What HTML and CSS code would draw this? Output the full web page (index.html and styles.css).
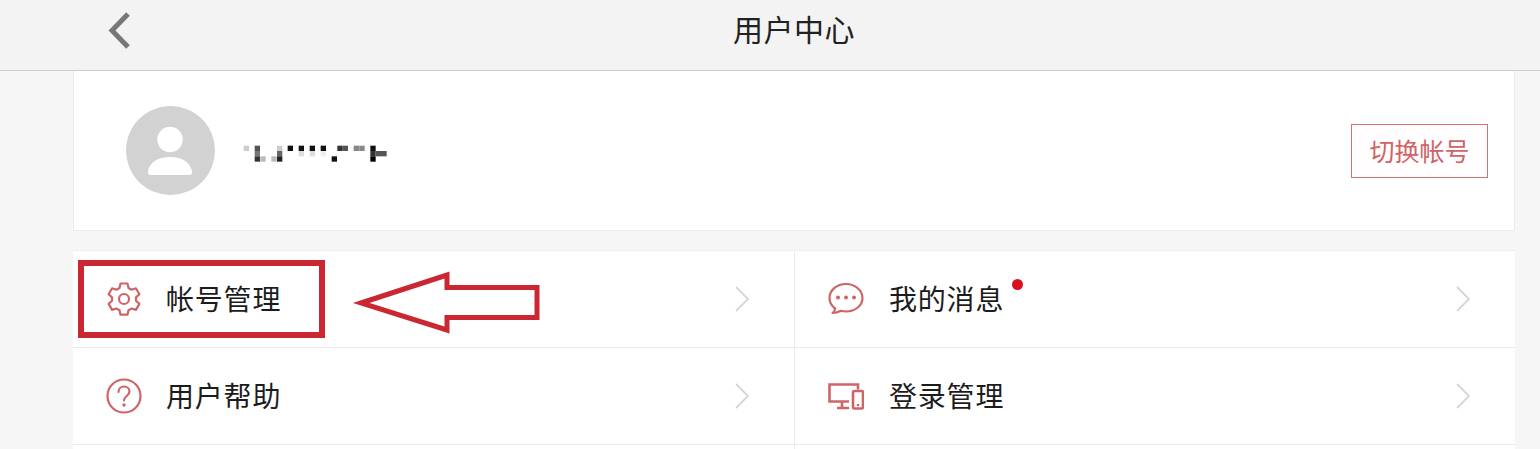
FILE: index.html
```html
<!DOCTYPE html>
<html lang="zh-CN">
<head>
<meta charset="utf-8">
<title>用户中心</title>
<link rel="stylesheet" href="styles.css">
</head>
<body>
<div class="page">
  <header class="topbar">
    <svg class="back" viewBox="0 0 24 40" width="24" height="40"><path d="M20 3 4 19.500 20 36" fill="none" stroke="#777" stroke-width="5"/></svg>
    <h1 class="title">用户中心</h1>
    <span></span>
  </header>
  <main class="content">
    <section class="profile">
      <svg class="avatar" viewBox="0 0 89 89" width="89" height="89">
        <circle cx="44.500" cy="44.500" r="44.500" fill="#d2d2d2"/>
        <circle cx="44" cy="33.500" r="12.700" fill="#fff"/>
        <path d="M25 69c-2.500 0-3.600-1.500-3.100-3.400C23.600 56 32 51 44 51s20.400 5 22.100 14.600c.4 2-.6 3.400-3.100 3.400z" fill="#fff"/>
      </svg>
      <svg class="mosaic" viewBox="540 436 444 54" width="148" height="18">
        <rect x="545" y="438" width="16" height="16" fill="#ccc"/>
        <rect x="578" y="438" width="16" height="16" fill="#555"/>
        <rect x="578" y="454" width="16" height="16" fill="#777"/>
        <rect x="578" y="470" width="16" height="16" fill="#333"/>
        <rect x="595" y="470" width="16" height="16" fill="#bbb"/>
        <rect x="628" y="470" width="16" height="16" fill="#bbb"/>
        <rect x="645" y="438" width="16" height="16" fill="#ccc"/>
        <rect x="645" y="454" width="16" height="16" fill="#666"/>
        <rect x="645" y="470" width="16" height="16" fill="#222"/>
        <rect x="677" y="438" width="16" height="16" fill="#111"/>
        <rect x="710" y="438" width="16" height="16" fill="#111"/>
        <rect x="710" y="454" width="16" height="16" fill="#ddd"/>
        <rect x="743" y="438" width="16" height="16" fill="#111"/>
        <rect x="743" y="454" width="16" height="16" fill="#ddd"/>
        <rect x="776" y="438" width="16" height="16" fill="#111"/>
        <rect x="776" y="454" width="16" height="16" fill="#eee"/>
        <rect x="809" y="470" width="16" height="16" fill="#111"/>
        <rect x="826" y="438" width="16" height="16" fill="#333"/>
        <rect x="842" y="438" width="16" height="16" fill="#555"/>
        <rect x="875" y="438" width="17" height="16" fill="#888"/>
        <rect x="892" y="438" width="16" height="16" fill="#888"/>
        <rect x="925" y="438" width="16" height="16" fill="#111"/>
        <rect x="925" y="454" width="16" height="16" fill="#333"/>
        <rect x="925" y="470" width="16" height="16" fill="#000"/>
        <rect x="941" y="454" width="33" height="16" fill="#555"/>
      </svg>
      <button class="switch">切换帐号</button>
    </section>
    <section class="menu">
      <div class="item">
        <svg class="icon" viewBox="0 0 36 36" width="36" height="36"><g fill="none" stroke="#cf6468" stroke-width="2.200" stroke-linejoin="round"><path d="M14.500 2.500h7l1 4.500 3 1.700 4.400-1.400 3.500 6-3.400 3.100v3.400l3.400 3.100-3.500 6-4.400-1.400-3 1.700-1 4.500h-7l-1-4.500-3-1.700-4.400 1.400-3.500-6 3.400-3.100v-3.400L2.600 13.300l3.500-6 4.400 1.400 3-1.700z"/><circle cx="18" cy="18" r="5"/></g></svg>
        <span class="label">帐号管理</span>
        <svg class="chev" viewBox="0 0 14 26" width="14" height="26"><path d="M1 1l12 12L1 25" fill="none" stroke="#d6d6d6" stroke-width="1.800"/></svg>
      </div>
      <div class="item">
        <svg class="icon" viewBox="0 0 36 36" width="36" height="36"><g fill="#cf6468"><path d="M18 3C8.600 3 1.500 9.200 1.500 17c0 4.300 2.200 8 5.700 10.500-.2 1.800-1.200 3.300-2.700 4.500 3.300 0 6-.8 8.300-2.200 1.700.4 3.400.7 5.200.7 9.400 0 16.500-6.200 16.500-13.500S27.400 3 18 3z" fill="none" stroke="#cf6468" stroke-width="2.200" stroke-linejoin="round"/><circle cx="10" cy="16.500" r="2"/><circle cx="18" cy="16.500" r="2"/><circle cx="26" cy="16.500" r="2"/></g></svg>
        <span class="label">我的消息</span>
        <i class="dot"></i>
        <svg class="chev" viewBox="0 0 14 26" width="14" height="26"><path d="M1 1l12 12L1 25" fill="none" stroke="#d6d6d6" stroke-width="1.800"/></svg>
      </div>
      <div class="item">
        <svg class="icon" viewBox="0 0 36 36" width="36" height="36"><g fill="none" stroke="#cf6468" stroke-width="2.200"><circle cx="18" cy="18" r="16.500"/><path d="M12.500 14c0-3.200 2.400-5.500 5.500-5.500s5.500 2.200 5.500 5c0 4.500-5.500 4.500-5.500 9" stroke-linecap="round"/></g><circle cx="18" cy="27" r="1.700" fill="#cf6468"/></svg>
        <span class="label">用户帮助</span>
        <svg class="chev" viewBox="0 0 14 26" width="14" height="26"><path d="M1 1l12 12L1 25" fill="none" stroke="#d6d6d6" stroke-width="1.800"/></svg>
      </div>
      <div class="item">
        <svg class="icon" viewBox="0 0 36 36" width="36" height="36"><g fill="none" stroke="#cf6468" stroke-width="2.600"><path d="M21 23.500H1.500V6.500H30v5"/><path d="M9 30h12M14 24v6"/><rect x="25" y="13" width="10" height="17.500" rx="1.500"/></g><circle cx="30" cy="27" r="1.300" fill="#cf6468"/></svg>
        <span class="label">登录管理</span>
        <svg class="chev" viewBox="0 0 14 26" width="14" height="26"><path d="M1 1l12 12L1 25" fill="none" stroke="#d6d6d6" stroke-width="1.800"/></svg>
      </div>
      <div class="item"></div>
      <div class="item"></div>
    </section>
  </main>
  <div class="mark-box"></div>
  <svg class="mark-arrow" viewBox="0 0 190 66" width="190" height="66"><path d="M8 33 94 5v12.500h90v30H94V60z" fill="none" stroke="#cb2733" stroke-width="5"/></svg>
</div>
</body>
</html>
```

FILE: styles.css
```css
html, body {
  margin: 0;
  padding: 0;
  height: 100%;
  overflow: hidden;
}
body {
  background: #f6f6f6;
  font-family: "Noto Sans CJK SC", "Noto Sans", sans-serif;
  color: #1c1c1c;
}
.page {
  position: relative;
  width: 1540px;
  height: 449px;
  overflow: hidden;
}
.topbar {
  display: grid;
  grid-template-columns: 1fr auto 1fr;
  align-items: center;
  height: 70px;
  padding: 0 25px 0 73px;
  background: #f3f3f3;
  border-bottom: 1px solid #cdcdcd;
}
.back {
  margin: 0 0 9px 35px;
}
.title {
  margin: 0 0 14px;
  font-size: 30px;
  font-weight: 400;
  letter-spacing: 0.5px;
  line-height: 1;
  color: #222;
}
.content {
  display: flex;
  flex-direction: column;
  gap: 19px;
  margin: 0 25px 0 73px;
}
.profile {
  display: flex;
  align-items: center;
  height: 160px;
  box-sizing: border-box;
  padding: 0 26px 0 52px;
  background: #fff;
  border: 1px solid #ececec;
  border-top: 0;
}
.mosaic {
  margin-left: 27px;
  margin-top: 6px;
  filter: blur(0.6px);
}
.switch {
  margin-left: auto;
  width: 137px;
  height: 54px;
  padding: 0;
  background: #fffdfd;
  border: 1px solid #cf7275;
  font: 400 25px/1 "Noto Sans CJK SC", sans-serif;
  color: #cf6468;
}
.menu {
  display: grid;
  grid-template-columns: 721px 721px;
  grid-auto-rows: 97px;
  background: #fff;
  border-top: 1px solid #efefef;
}
.item {
  display: flex;
  align-items: center;
  position: relative;
  box-sizing: border-box;
  padding: 0 45px 0 33px;
  border-bottom: 1px solid #ebebeb;
}
.item:nth-child(even) {
  border-left: 1px solid #ececec;
}
.icon {
  flex: none;
}
.label {
  margin: 0 0 2px 24px;
  font-size: 28px;
  letter-spacing: 0.8px;
  line-height: 1;
  color: #1c1c1c;
}
.item:nth-child(even) .label {
  margin-left: 25px;
}
.chev {
  margin-left: auto;
}
.dot {
  position: absolute;
  left: 217px;
  top: 28px;
  width: 11px;
  height: 11px;
  border-radius: 50%;
  background: #d9101c;
}
.mark-box {
  position: absolute;
  left: 78px;
  top: 260px;
  width: 247px;
  height: 78px;
  box-sizing: border-box;
  border: 6px solid #cb2733;
}
.mark-arrow {
  position: absolute;
  left: 353px;
  top: 270px;
}
```
